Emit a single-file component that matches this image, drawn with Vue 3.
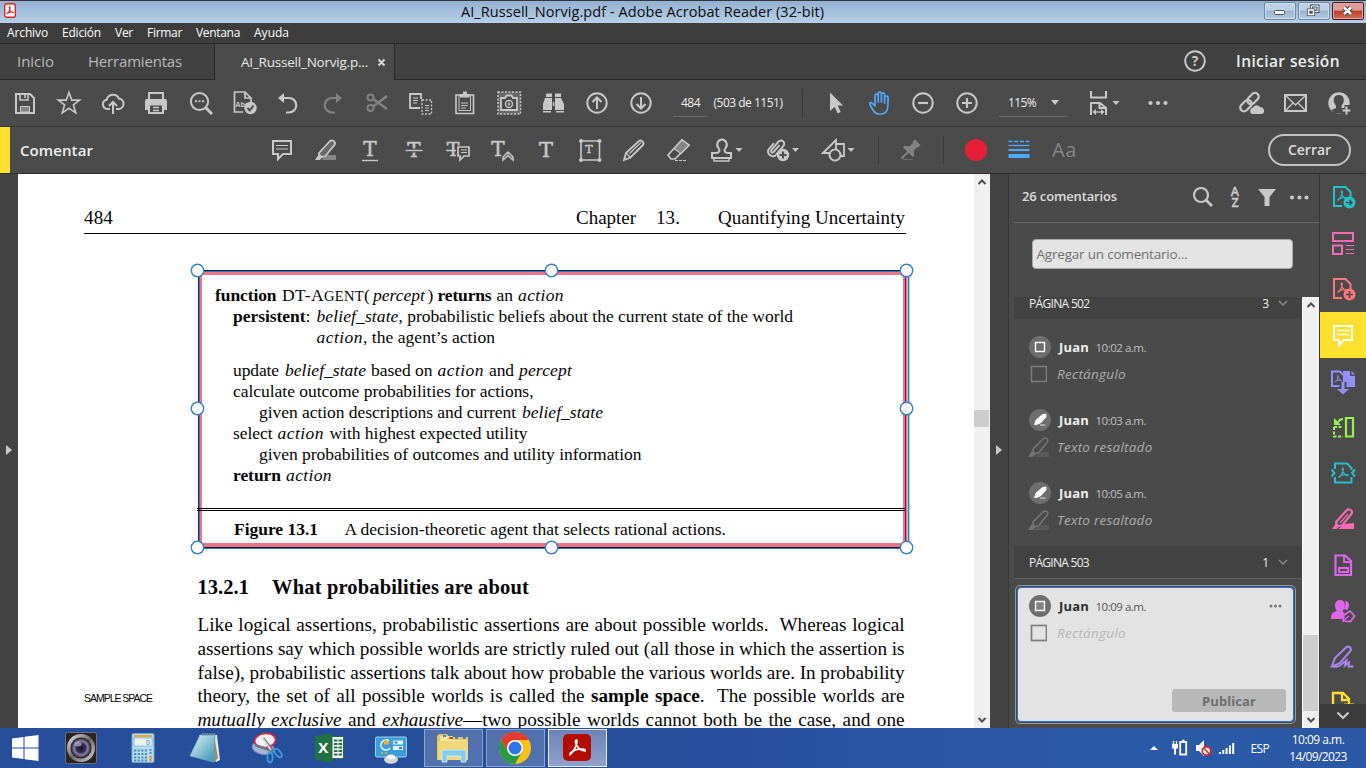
<script setup>
// Stretches or tightens a run of text to a given width through letter-spacing.
const vFit = {
  mounted(el, { value }) {
    if (!value) return
    const n = el.textContent.length
    const w = el.getBoundingClientRect().width
    el.style.letterSpacing = ((value - w) / n).toFixed(4) + 'px'
  }
}

const F = 'fill="currentColor" stroke="none"'
const T = (x, y, s) => `<text x="${x}" y="${y}" font-size="${s}" font-family="DejaVu Serif" text-anchor="middle" fill="currentColor" stroke="currentColor" stroke-width=".5">T</text>`
const acro = (x, y, s) => `<path transform="translate(${x} ${y}) scale(${s})" stroke-width="1.3" d="M-5 5C-2 3.500 .3-1 .3-4.500C.3-6-1-6-.8-4.300C-.3-1 2 2.200 5 3C6.300 3.200 5.800 1.500 4 1.700C1 1.700-2.500 2.600-4.800 4.200"/>`
const caret = (x) => `<path ${F} d="M${x - 3.500}-2h7l-3.500 4z"/>`

const icons = {
  save: '<path d="M-9-9H5l4 4V10H-9z"/><path d="M-5-9v6h8v-6M0-8v3" stroke-width="1.600"/><path fill="#858585" stroke-width="1" d="M-4.500 3.500h9V9h-9z"/>',
  star: '<path d="M0-10.500l2.700 7.600H10.700L4.400 1.900l2.400 8L0 5.300l-6.800 4.600 2.400-8L-10.700-2.900h8z" stroke-width="1.600"/>',
  cloud: '<path d="M-3 6h-2.500a4.700 4.700 0 0 1-.8-9.300a6.500 6.500 0 0 1 12.200-1.200a5.300 5.300 0 0 1 .1 10.500H3"/><path d="M0 11V-1M-4 3l4-4 4 4"/>',
  print: `<g transform="translate(-1 0)"><path d="M-7-4v-6H7v6"/><path ${F} d="M-11-2q0-2 2-2H9q2 0 2 2v9H-11z"/><path fill="#4b4b4b" d="M-7 1.500V10H7V1.500z" /><path stroke-width="1.300" d="M-3 4.500h6M-3 7.500h6"/></g>`,
  searchdots: `<circle cx="-1.500" cy="-1.500" r="8.600"/><path stroke-width="3" d="M5 5l6 6"/><path ${F} d="M-6-2.700h2v2h-2zm3.500 0h2v2h-2zm3.500 0h2v2h-2z"/>`,
  check: `<path d="M-2 9h-8.500V-11H0l6 6v5M0-11v6h6" stroke-width="1.700"/><text x="-3" y="4" font-size="7" font-family="Open Sans" font-weight="700" text-anchor="middle" ${F}>Abc</text><circle cx="5.500" cy="5" r="6.200" ${F}/><path stroke="#4b4b4b" d="M2.500 5l2.300 2.400L8.500 2.500"/>`,
  undo: `<g transform="translate(-1 0)"><path stroke-width="2.200" d="M-5-5H1a7 7 0 0 1 0 14.500H-2"/><path ${F} d="M-10-5l6-5v10z"/></g>`,
  redo: `<g transform="scale(-1 1)" color="#828282"><path stroke="#828282" stroke-width="2.200" d="M-5-5H1a7 7 0 0 1 0 14.500H-2"/><path ${F} d="M-9-5l6-5v10z"/></g>`,
  cut: '<g stroke="#828282"><circle cx="-6.500" cy="-5.500" r="3"/><circle cx="-6.500" cy="5" r="3"/><path stroke-width="2.600" d="M-4-4L10 6M-4 3.500L10-7"/></g>',
  copy: '<path d="M-1 5h-10V-9H0v5" stroke-width="1.800"/><path stroke-width="1" d="M-8-5h5M-8-2.500h5M-8 0h4"/><path stroke-width="1.400" stroke-dasharray="2 1.500" d="M1-3h9.500V11H1z"/><path stroke-width="1" d="M4 2.500h4M4 5h4M4 7.500h4"/>',
  paste: `<path d="M-9-8V10.500H8.500V-8z" stroke-width="1.600"/><path stroke-width="1" d="M-6-8V7.500H5.500V-8"/><path stroke-width="1.200" d="M-4 0h7M-4 2.500h7M-4 5h5"/><path ${F} d="M-5-9h3v-2.500h4v2.500h2.500v3.500H-5z"/>`,
  camera: '<path stroke-width="1.500" stroke-dasharray="2 1.500" fill="#686868" d="M-11-11h22.500V11H-11z"/><path fill="#4b4b4b" stroke-width="1.800" d="M-8-5h4l1.500-2.500h5L4-5h4V7H-8z"/><circle cy="1" r="3.500" stroke-width="1.400"/><path stroke-width="1.200" d="M-1.500 1h3M0-.5v3"/>',
  find: `<g ${F}><path d="M-7-9.500h6v3.500h-6zM2-9.500h6v3.500H2zM-8-5h7v12h-9V1zM2-5h6l3 6v6H2zM-10 8h8v1.500h-8zM3 8h8v1.500H3zM-.2-1h1.500v4h-1.500z"/></g>`,
  up: '<circle r="9.700"/><path d="M0 6V-5M-4.500-1L0-5.500 4.500-1"/>',
  down: '<circle r="9.700"/><path d="M0-6V5M-4.500 1L0 5.500 4.500 1"/>',
  pointer: `<path ${F} d="M-5-10.500L8 2.500H2.700l3 6.500-3 1.500-3-6.500L-5 8z"/>`,
  hand: '<path transform="translate(1 0)" stroke="#4fa9f8" stroke-width="1.700" stroke-linejoin="round" d="M-5 0V-7c0-2.400 3.200-2.400 3.200 0v6V-9.500c0-2.200 3.200-2.200 3.200 0V-1v-7.500c0-2.200 3.200-2.200 3.200 0V0v-5c0-2.400 3.500-2.400 3.500 0l-.3 8.500C7.500 8.500 5 11 1 11H-1C-4 11-5.500 9.500-7 7l-3-5c-1-2.200 1-3.300 2.600-1.500L-5 3z"/>',
  minus: '<circle r="9.700"/><path stroke-width="2.200" d="M-5 0H5"/>',
  plus: '<circle r="9.700"/><path stroke-width="2.200" d="M-5 0H5M0-5V5"/>',
  fit: `<path d="M-16-12v6.500h15V-12M-16 12V0h9l6 5v7M-7.500 0v5H-1" /><path stroke-width="1.300" d="M-13.500 9H-3.500"/><path ${F} d="M-14.500 9l3.500-3v6zM-2.500 9l-3.500-3v6z"/>` + caret(9),
  dots: `<g ${F}><circle cx="-7.500" r="2.100"/><circle r="2.100"/><circle cx="7.500" r="2.100"/></g>`,
  link: `<g transform="translate(-1 -1) rotate(-45)"><rect x="-12" y="-4" width="13" height="7.500" rx="3.700" stroke-width="2.200"/><rect x="-2" y="-4" width="13" height="7.500" rx="3.700" stroke-width="2.200"/></g><path ${F} d="M1 11a3.500 3.500 0 0 1 1-6.500a4 4 0 0 1 7-.5a3.700 3.700 0 0 1 2 7z"/>`,
  mail: '<path d="M-10-8h21V8h-21z"/><path stroke-width="1.300" d="M-10-8L.5 2 11-8M-10 8l8-8M11 8L3 0"/>',
  user: `<circle r="10.700" ${F}/><g fill="#4b4b4b" stroke="none"><path d="M-.2-8c4.500 0 5.700 3.500 4.700 7.500L2.500 3v2l4.500 2-4 3.500h-7L-7.500 7l4.500-2V3L-5-.5c-1-4 .5-7.500 4.800-7.500z"/><path d="M5.500 2h6v9h-9V5h3z"/></g><path stroke-width="2" d="M7.500 3.500v8M3.500 7.500h8"/>`,

  comment: '<path d="M-9-9H9V4H1l-5 5V4h-5z"/><path stroke-width="1.200" d="M-6-4.500H6M-6-1H6"/>',
  marker: `<path fill="#858585" stroke="none" d="M-4 9.500L1 5h9v5H-5z"/><path d="M-7 3L3.500-8.500c2-2.200 7-.5 5 3.500L-1 6.500-6 7z" fill="#6a6a6a" stroke-width="1.800"/><path ${F} d="M-7 4l4 3-3.500 3H-11z"/>`,
  tunder: T(0, 6, 20) + '<path stroke-width="1.400" d="M-8 10.500H8"/>',
  tstrike: T(0, 7, 20) + '<path stroke="#4b4b4b" stroke-width="4" d="M-8 .5H8"/><path stroke-width="1.400" d="M-8.500 0.500H8.500"/>',
  treplace: T(-5, 6, 19) + '<path fill="#4b4b4b" stroke="none" d="M-2-4h15V12H-2z"/><path d="M-12 .5H-2M0-3H11V6H6L2 10V6H0z" stroke-width="1.700"/><path stroke-width="1" d="M3 0h6M3 2.500h6"/>',
  tinsert: T(-4, 6, 20) + '<path stroke-width="1.500" d="M1 10V7l5-5 5 5v3l-5-4.500z"/>',
  text: T(0, 6.500, 21),
  textbox: T(-1, 3, 11) + `<path stroke-width="1.600" d="M-9-9H9.500V10H-9z"/><g ${F}><circle cx="-9" cy="-9" r="2"/><circle cx="9.500" cy="-9" r="2"/><circle cx="-9" cy="10" r="2"/><circle cx="9.500" cy="10" r="2"/></g>`,
  pencil: '<path stroke-width="1.800" d="M-8 3L5-9c2-2 6 2 4 4L-3.500 7.500-10 10z"/><path stroke-width="1.200" d="M-4.500 3.500L7-7.500M-8 3l4.500 4.500"/>',
  eraser: '<path stroke-width="1.700" d="M-10 5L4-10l7 5L-3 9h-4z"/><path fill="#858585" stroke-width="1.200" d="M-4-1.500L4-10l7 5-8 8.500z"/><path stroke-width="1" stroke-dasharray="3 1" d="M-3 10.500H9"/>',
  stamp: '<path d="M-10 3h4c4 0 4-3 2.500-5C-6.500-5-4-10.500 0-10.500S6.500-5 3.500-2C2 0 2 3 6 3h3v5h-19z"/><path stroke-width="1.500" d="M-8 8v3H7V8"/>' + caret(17),
  clip: `<path transform="translate(-2 0) rotate(40)" stroke-width="1.900" d="M-6-4V5a5 5 0 0 0 9 0V-8a3 3 0 0 0-6.500 0V3a1.500 1.500 0 0 0 3 0V-6"/><circle cx="5" cy="5" r="6.200" ${F}/><path stroke="#4b4b4b" d="M5 1.500v7M1.500 5h7"/>` + caret(17.5),
  shapes: '<path d="M-11 3L2-10V3zM2-6h8v12H7" stroke-width="1.800"/><circle cx="1" cy="5" r="5.500" fill="#4b4b4b"/>' + caret(17),
  pin: '<g transform="rotate(45)" fill="#828282" stroke="none"><path d="M-4-11H4v3L3-7v5l4 3v2H1v9h-2V3h-6V1l4-3v-5l-1-1z"/></g><path stroke="#6c6c6c" stroke-width="1.200" d="M-7 9.500H3"/>',
  weight: '<g stroke="#4fa9f8"><path stroke-width="1.300" stroke-dasharray="4 1.700" d="M-10.500-8.500h21"/><path stroke-width="1.300" d="M-10.500-4.500h21"/><path stroke-width="2.200" d="M-10.500 0h21"/><path stroke-width="4" d="M-10.500 6h21"/></g>',

  rExport: `<path d="M-1 9h-8V-10H2.500L7.500-5v5"/>${acro(-1, -1, 0.9)}<circle cx="6.500" cy="5.500" r="6" ${F}/><path stroke="#4b4b4b" stroke-width="1.600" d="M3 5.500h6M6.500 3l2.500 2.500L6.500 8"/>`,
  rOrganize: '<path d="M-10-10h20v8h-20zM-10 2.500H-1V11h-9z"/><path stroke-width="1.200" d="M3 2.500h8M3 6.500h8M3 10.500h8"/>',
  rCreate: `<path d="M-1 9h-8V-10H2.500L7.500-5v5"/>${acro(-1, -1, 0.9)}<circle cx="6.500" cy="5.500" r="6" ${F}/><path stroke="#4b4b4b" stroke-width="1.600" d="M3 5.500h7M6.500 2v7"/>`,
  rComment: '<path d="M-9-9H9V5H1l-5 5V5h-5z"/><path stroke-width="1.700" d="M-6-4.500H6M-6-.5H6"/>',
  rCombine: `<path ${F} d="M0-10h7v5h5V6H3z"/><path ${F} d="M8.500-10L12-6.500H8.500z"/><path fill="#4b4b4b" d="M-2 5h-9V-9.500h8l4 4V5z"/>${acro(-5, -2, 0.65)}<path stroke="#4b4b4b" stroke-width="7" d="M0 1v9"/><path stroke-width="3" d="M0 1v8"/><path ${F} d="M-6 8H6L0 13.500z"/>`,
  rPages: `<path stroke-width="2.200" d="M3-9h7V9.500H3z"/><path stroke-dasharray="3 1.500" d="M-9 0v9.500H0M-9 0H0"/><path stroke-width="2.200" d="M0-8c-3 0-4 1.500-5 3"/><path ${F} d="M-9-9v7h7z"/>`,
  rCompress: `<path d="M-8-4V-9.500H4L8.500-5v2M-8 4v5.500H8.500V4"/>${acro(0, 0, 0.9)}<path d="M-11.500-3.500L-8.500 0l-3 3.500M12-3.500L9 0l3 3.500"/>`,
  rMarker: `<path ${F} d="M-4 9.500L1 5l10-1v6H-5z"/><path stroke-width="2.100" d="M-7 3L3.500-8.500c2-2.200 7-.5 5 3.500L-1 6.500-6 7z" fill="#4b4b4b"/><path stroke-width="1.200" d="M-3 4L5-5"/><path ${F} d="M-7 4l4 3-3.500 3H-11z"/>`,
  rForm: '<path stroke-width="2.200" d="M-7.500-9.500H2L8-4V10H-7.500z"/><path stroke-width="1.800" d="M1-9.500V-3H8M-4 3H5v4h-9z"/>',
  rSign: `<g ${F}><path d="M-3-11c6 0 6 7 2.500 11L2 3-1 8h-11c0-5 1-7 6-8c-3-4-3-11 3-11zM2-10c5 0 5 6 2 9L1-2c1.500-3 2-6 1-8z"/></g><path fill="#4b4b4b" stroke-width="1.700" d="M0 10l1-6 6-4 4.500 5-4 5.500z"/><path stroke-width="1.300" d="M1 9l5-4"/>`,
  rFill: '<path stroke-width="2" d="M-11 9l3-8L3-9.500c2-2 6 0 4.500 3.500L-3 6l-7.500 3.500c5 1 8-.5 10-3l4-3-1.500 5 4-3-.500 4h5"/>',
  rLast: '<path stroke-width="2.300" d="M-10 12V-10H0l6 6v6M-1-10v7h7"/><path d="M1 1.500h10"/>'
}

const menus = [['Archivo', 41], ['Edición', 39], ['Ver', 18], ['Firmar', 35], ['Ventana', 44], ['Ayuda', 35]]
const bar1 = ['save', 'star', 'cloud', 'print', 'searchdots', 'check', 'undo', 'redo', 'cut', 'copy', 'paste', 'camera', 'find', 'up', 'down']
const bar2 = ['comment', 'marker', 'tunder', 'tstrike', 'treplace', 'tinsert', 'text', 'textbox', 'pencil', 'eraser']
const rail = [
  ['rExport', '#24c1cc'], ['rOrganize', '#f56bb5'], ['rCreate', '#fa777b'], ['rComment', '#fff'],
  ['rCombine', '#9490fa'], ['rPages', '#9bf050'], ['rCompress', '#24c1cc'], ['rMarker', '#f56bb5'],
  ['rForm', '#e066ee'], ['rSign', '#e066ee'], ['rFill', '#a984ee'], ['rLast', '#ffe02e']
]

// Each run: text, style, gap before it, width
const code = [
  [15, [['function', 'b', 0, 61.500], ['DT-A', '', 5.500, 42], ['GENT', 'sc', 0, 40], ['(', '', 0, 6], ['percept', 'i', 3, 52], [')', '', 2.500, 6], ['returns', 'b', 4, 54], ['an', '', 5, 16.500], ['action', 'i', 5, 46]]],
  [33, [['persistent', 'b', 0, 72.500], [':', '', 0, 5], ['belief_state', 'i', 6, 82], [', probabilistic beliefs about the current state of the world', '', 0, 394.500]]],
  [116.500, [['action', 'i', 0, 46.500], [', the agent’s action', '', 0, 132]]],
  null,
  [33, [['update', '', 0, 46], ['belief_state', 'i', 6, 81], ['based on', '', 5, 61.500], ['action', 'i', 5, 46.500], ['and', '', 5, 25], ['percept', 'i', 5, 53]]],
  [33, [['calculate outcome probabilities for actions,', '', 0, 300.500]]],
  [59, [['given action descriptions and current', '', 0, 257], ['belief_state', 'i', 6, 81]]],
  [33, [['select', '', 0, 39.500], ['action', 'i', 5, 46.500], ['with highest expected utility', '', 5.500, 198]]],
  [59, [['given probabilities of outcomes and utility information', '', 0, 382.500]]],
  [33, [['return', 'b', 0, 48], ['action', 'i', 5, 46]]]
]
const comments = [
  { time: '10:02 a.m.', kind: 'rect', label: 'Rectángulo', w: 69 },
  { time: '10:03 a.m.', kind: 'mark', label: 'Texto resaltado', w: 95.500 },
  { time: '10:05 a.m.', kind: 'mark', label: 'Texto resaltado', w: 95.500 }
]
const handles = ['tl', 'tc', 'tr', 'ml', 'mr', 'bl', 'bc', 'br']
</script>

<template>
  <div class="screen">
    <header class="title">
      <svg class="pdf" width="12" height="15" viewBox="0 0 12 15"><rect x=".7" y=".7" width="10.600" height="13.600" rx="2" fill="#fff" stroke="#e2231a" stroke-width="1.400" /><path d="M2.500 11C4 10 6 7 6 4.500C6 3 5 3.500 5.300 5C6 8 8 9.500 9.700 9.800C8 8.800 5 9 2.500 11z" fill="none" stroke="#e2231a" stroke-width="1.100" /></svg>
      <span v-fit="363">AI_Russell_Norvig.pdf - Adobe Acrobat Reader (32-bit)</span>
      <div class="wins">
        <i><svg width="32" height="18" viewBox="0 0 32 18"><rect x="10.500" y="8.500" width="10" height="4" rx="1" fill="#f5f5f5" stroke="#4e5666" /></svg></i>
        <i><svg width="32" height="18" viewBox="0 0 32 18" fill="none"><path d="M13.500 4h6.500v5.500h-6.500z" stroke="#4e5666" stroke-width="3" /><path d="M13.500 4h6.500v5.500h-6.500z" stroke="#fff" /><path d="M10.500 8h5v4.500h-5z" fill="#4e5666" stroke="#4e5666" stroke-width="3.200" /><path d="M10.500 8h5v4.500h-5z" stroke="#fff" stroke-width="1.400" /></svg></i>
        <i class="x"><svg width="32" height="18" viewBox="0 0 32 18"><path d="M12 5.500l7 6.500M19 5.500l-7 6.500" stroke="#4a4450" stroke-width="4.500" /><path d="M12 5.500l7 6.500M19 5.500l-7 6.500" stroke="#fff" stroke-width="2.400" /></svg></i>
      </div>
    </header>
    <nav class="menu"><span v-for="m in menus" :key="m[0]" v-fit="m[1]">{{ m[0] }}</span></nav>
    <div class="tabs">
      <div class="home"><span v-fit="37">Inicio</span><span v-fit="94">Herramientas</span></div>
      <div class="tab"><span v-fit="127">AI_Russell_Norvig.p...</span><svg width="9" height="9" viewBox="0 0 9 9"><path d="M1.500 1.500l6 6M7.500 1.500l-6 6" stroke="#d5d5d5" stroke-width="2" /></svg></div>
      <div class="tabrest">
        <svg width="22" height="22" viewBox="-11 -11 22 22" fill="none"><circle r="9.800" stroke="#c8c8c8" stroke-width="1.900" /><text y="5" text-anchor="middle" font-size="14" font-weight="700" fill="#c8c8c8">?</text></svg>
        <b v-fit="104">Iniciar sesión</b>
      </div>
    </div>
    <div class="bar one">
      <svg v-for="n in bar1" :key="n" class="ic" viewBox="-22 -23 44 46" v-html="icons[n]" />
      <span class="page"><span v-fit="19">484</span></span>
      <span class="of" v-fit="69">(503 de 1151)</span>
      <i class="sep" />
      <svg v-for="n in ['pointer', 'hand', 'minus', 'plus']" :key="n" class="ic" viewBox="-22 -23 44 46" v-html="icons[n]" />
      <span class="zoom"><span v-fit="28">115%</span><svg width="8" height="5" viewBox="0 0 8 5"><path d="M0 0h8L4 5z" fill="#c8c8c8" /></svg></span>
      <svg class="ic fitp" viewBox="-22 -23 44 46" v-html="icons.fit" />
      <svg class="ic" viewBox="-22 -23 44 46" v-html="icons.dots" />
      <span class="grow" />
      <svg v-for="n in ['link', 'mail', 'user']" :key="n" class="ic" viewBox="-22 -23 44 46" v-html="icons[n]" />
    </div>
    <div class="bar two">
      <i class="yellow" />
      <b class="name"><span v-fit="73">Comentar</span></b>
      <svg v-for="n in bar2" :key="n" class="ic" viewBox="-22 -23 44 46" v-html="icons[n]" />
      <svg v-for="n in ['stamp', 'clip', 'shapes']" :key="n" class="ic wide" viewBox="-22 -23 56 46" v-html="icons[n]" />
      <i class="sep s1" />
      <svg class="ic pinc" viewBox="-22 -23 44 46" v-html="icons.pin" />
      <i class="sep" />
      <i class="red" />
      <svg class="ic" viewBox="-22 -23 44 46" v-html="icons.weight" />
      <span class="aa" v-fit="25">Aa</span>
      <span class="grow" />
      <button class="close"><span v-fit="43">Cerrar</span></button>
    </div>
    <main>
      <aside class="strip left"><i class="tri" /></aside>
      <section class="paper">
        <div class="running"><span v-fit="29">484</span><span class="grow" /><span v-fit="60">Chapter</span><span class="r2" v-fit="24">13.</span><span class="r3" v-fit="187">Quantifying Uncertainty</span></div>
        <figure>
          <div class="code">
            <template v-for="(l, k) in code" :key="k">
              <div v-if="l" class="cl" :style="{ paddingLeft: l[0] + 'px' }"><span v-for="(s, j) in l[1]" :key="j" :class="s[1]" :style="{ marginLeft: s[2] + 'px' }" v-fit="s[3]">{{ s[0] }}</span></div>
              <div v-else class="skip" />
            </template>
          </div>
          <div class="rule" />
          <figcaption><b v-fit="84">Figure 13.1</b><span v-fit="381.500">A decision-theoretic agent that selects rational actions.</span></figcaption>
          <i v-for="h in handles" :key="h" class="handle" :class="h" />
        </figure>
        <h2><span v-fit="51.500">13.2.1</span><span class="ht" v-fit="257">What probabilities are about</span></h2>
        <div class="body">
          <div class="note"><span v-fit="68">SAMPLE SPACE</span></div>
          <div class="para">
            <p>Like logical assertions, probabilistic assertions are about possible worlds.&nbsp; Whereas logical</p>
            <p>assertions say which possible worlds are strictly ruled out (all those in which the assertion is</p>
            <p>false), probabilistic assertions talk about how probable the various worlds are. In probability</p>
            <p>theory, the set of all possible worlds is called the <b>sample space</b>.&nbsp; The possible worlds are</p>
            <p><em>mutually exclusive</em> and <em>exhaustive</em>—two possible worlds cannot both be the case, and one</p>
          </div>
        </div>
      </section>
      <div class="scroll doc"><svg class="ar" viewBox="0 0 10 8"><path d="M1.500 6L5 2.500 8.500 6" /></svg><i class="thumb" /><svg class="ar" viewBox="0 0 10 8"><path d="M1.500 2L5 5.500 8.500 2" /></svg></div>
      <aside class="strip right"><i class="tri" /></aside>
      <section class="panel">
        <div class="phead">
          <b v-fit="95">26 comentarios</b>
          <svg width="126" height="30" viewBox="0 0 126 30" fill="none" stroke="#c8c8c8">
            <circle cx="17" cy="13" r="7" stroke-width="2.200" /><path d="M22 18l6 6" stroke-width="2.600" />
            <g fill="#c8c8c8" stroke="#c8c8c8" stroke-width=".3" font-size="12.500" font-weight="600" text-anchor="middle"><text x="51" y="14">A</text><text x="51" y="24.500">Z</text></g>
            <path d="M74 7h18l-6.500 8v9h-5v-9z" fill="#c8c8c8" stroke="none" />
            <g fill="#c8c8c8" stroke="none"><circle cx="108" cy="15.500" r="2.100" /><circle cx="115.500" cy="15.500" r="2.100" /><circle cx="122.500" cy="15.500" r="2.100" /></g>
          </svg>
        </div>
        <div class="addbox"><div class="add"><span v-fit="151">Agregar un comentario...</span></div></div>
        <div class="listrow">
          <div class="list">
            <div class="pg first"><span v-fit="60.500">PÁGINA 502</span><span class="grow" /><span>3</span><svg width="10" height="6" viewBox="0 0 10 6"><path d="M1 1l4 4 4-4" /></svg></div>
            <article v-for="c in comments" :key="c.time">
              <div class="who">
                <svg width="22" height="22" viewBox="-11 -11 22 22"><circle r="11" fill="#6e6e6e" /><rect v-if="c.kind === 'rect'" x="-4.500" y="-4.500" width="9" height="9" fill="none" stroke="#fff" stroke-width="1.400" /><path v-else d="M-5.500 4.500l1.500-4.500L2.500-5.500 6-6v3L.5 3l-4 1.500zM0 5h5.500" fill="#fff" stroke="#fff" stroke-width=".8" /></svg>
                <b v-fit="30">Juan</b><span v-fit="50.500">{{ c.time }}</span>
              </div>
              <div class="what">
                <svg v-if="c.kind === 'rect'" width="18" height="18" viewBox="0 0 18 18"><rect x="2.500" y="1.500" width="15" height="15" fill="none" stroke="#7d7d7d" stroke-width="1.500" /></svg>
                <svg v-else class="mk" width="22" height="22" viewBox="-11 -11 22 22"><path d="M-5 9.500L2 5h8v5H-5z" fill="#5a5a5a" /><path d="M-6 2L4-8c2-2 6-.5 4.500 2.500L0 5.500-5 7z" fill="#4a4a4a" stroke="#747474" stroke-width="1.600" /><path d="M-7 4l4 3-3.500 3H-11z" fill="#747474" /></svg>
                <i v-fit="c.w">{{ c.label }}</i>
              </div>
            </article>
            <div class="pg second"><span v-fit="60">PÁGINA 503</span><span class="grow" /><span>1</span><svg width="10" height="6" viewBox="0 0 10 6"><path d="M1 1l4 4 4-4" /></svg></div>
            <div class="card"><div class="inner">
              <div class="who">
                <svg width="22" height="22" viewBox="-11 -11 22 22"><circle r="11" fill="#6e6e6e" /><rect x="-4.500" y="-4.500" width="9" height="9" fill="#858585" stroke="#fff" stroke-width="1.400" /></svg>
                <b v-fit="30">Juan</b><span v-fit="50.500">10:09 a.m.</span><span class="grow" />
                <svg width="13" height="4" viewBox="0 0 13 4" fill="#777"><circle cx="2" cy="2" r="1.500" /><circle cx="6.500" cy="2" r="1.500" /><circle cx="11" cy="2" r="1.500" /></svg>
              </div>
              <div class="what"><svg width="18" height="18" viewBox="0 0 18 18"><rect x="2.500" y="1.500" width="15" height="15" fill="none" stroke="#7d7d7d" stroke-width="1.700" /></svg><i v-fit="69">Rectángulo</i></div>
              <button><span v-fit="54">Publicar</span></button>
            </div></div>
          </div>
          <div class="scroll com"><svg class="ar" viewBox="0 0 10 8"><path d="M1.500 6L5 2.500 8.500 6" /></svg><i class="thumb" /><svg class="ar" viewBox="0 0 10 8"><path d="M1.500 2L5 5.500 8.500 2" /></svg></div>
        </div>
      </section>
      <aside class="rail">
        <div class="tools"><div v-for="r in rail" :key="r[0]" class="cell" :class="{ on: r[0] === 'rComment' }" :style="{ color: r[1] }"><svg class="ric" viewBox="-23 -23 46 46" v-html="icons[r[0]]" /></div></div>
        <div class="more"><svg width="14" height="9" viewBox="0 0 14 9"><path d="M1.500 1.500L7 7l5.500-5.500" fill="none" stroke="#c8c8c8" stroke-width="2.200" /></svg></div>
      </aside>
    </main>
    <footer>
      <div class="start"><svg width="28" height="28" viewBox="0 0 28 28" fill="#fff"><path d="M1 4.500L12.500 3v10.500H1zM13.500 2.800L27.500 1v12.500h-14zM1 14.500h11.500V25L1 23.500zM13.500 14.500h14V27l-14-1.800z" /></svg></div>
      <div class="app"><svg viewBox="0 0 34 34"><defs><linearGradient id="cm" x2="1" y2="1"><stop stop-color="#eee" /><stop offset=".5" stop-color="#6b6866" /><stop offset="1" stop-color="#ddd" /></linearGradient><radialGradient id="ln"><stop stop-color="#171126" /><stop offset=".45" stop-color="#3a2f58" /><stop offset=".65" stop-color="#8c80a5" /><stop offset="1" stop-color="#16141c" /></radialGradient></defs><rect x="1.500" y="1.500" width="31" height="31" rx="2" fill="#292423" stroke="#87898f" stroke-width=".7" /><circle cx="17" cy="17" r="14" fill="url(#cm)" /><circle cx="17" cy="17" r="10.500" fill="url(#ln)" /><ellipse cx="14" cy="13" rx="3.500" ry="2.500" fill="#b5a9cc" opacity=".7" /></svg></div>
      <div class="app"><svg viewBox="0 0 34 34"><rect x="6" y="2.500" width="22" height="29" rx="1.500" fill="#b9dcf0" stroke="#6fa9d2" /><rect x="8" y="4" width="18" height="2" fill="#eda33c" /><rect x="8" y="7" width="18" height="8" fill="#e8f5fb" stroke="#75aacb" stroke-width=".7" /><text x="22" y="14" font-size="7" fill="#3674a7" text-anchor="middle">0</text><path d="M8 19.500h13M8 23h13M8 26.500h13M8 29.500h13" stroke="#4b8ec1" stroke-width="2.200" stroke-dasharray="2.300 1.300" /><path d="M24.500 18v5" stroke="#4b8ec1" stroke-width="2" stroke-dasharray="2 1" /><path d="M24.500 24.500v6" stroke="#e5962e" stroke-width="2.200" /></svg></div>
      <div class="app"><svg viewBox="0 0 34 34"><defs><linearGradient id="np" x2="1" y2="1"><stop stop-color="#e6f7fa" /><stop offset="1" stop-color="#3290ae" /></linearGradient></defs><path d="M11 4h18l3 25-4 2z" fill="#e2e6df" /><path d="M12 4h15l-1 27L2 25z" fill="url(#np)" stroke="#6cb7cd" stroke-width=".7" /><path d="M14 3.500h14" stroke="#8a989d" stroke-width="2.500" stroke-dasharray="1.300 1" /><path d="M26 5l4 22-4 4z" fill="#94897b" /></svg></div>
      <div class="app"><svg viewBox="0 0 34 34"><ellipse cx="13" cy="17" rx="11" ry="6.500" fill="#a9b4da" stroke="#7184bd" transform="rotate(8 13 17)" /><ellipse cx="15" cy="9.500" rx="10.500" ry="7" fill="#f5f3f4" stroke="#df2432" stroke-width="1.600" transform="rotate(-8 15 9)" /><path d="M13 7l11 14M5 14l20 7" stroke="#6d7786" stroke-width="2.500" /><path d="M11 5l10 14" stroke="#e9ecef" stroke-width="1.300" /><ellipse cx="20" cy="26.500" rx="2.500" ry="5" fill="none" stroke="#3c9ce0" stroke-width="1.800" /><ellipse cx="28" cy="22" rx="2.500" ry="5" fill="none" stroke="#3c9ce0" stroke-width="1.800" transform="rotate(-40 28 22)" /></svg></div>
      <div class="app"><svg viewBox="0 0 34 34"><path d="M20 5.500h11.500v22H20z" fill="#fff" stroke="#207245" /><path d="M22 9.500h8M22 13h8M22 16.500h8M22 20h8M22 23.500h8" stroke="#207245" stroke-width="2" stroke-dasharray="3.500 1" /><path d="M3 5l17-3v30L3 28.500z" fill="#207245" /><text x="11.300" y="22" font-size="15" font-weight="700" text-anchor="middle" fill="#fff">X</text></svg></div>
      <div class="app"><svg viewBox="0 0 34 34"><rect x="1.500" y="6" width="31" height="20" rx="1.500" fill="#3d9cd9" stroke="#9bd3f2" /><path d="M15 10a5 5 0 1 0 1 7" fill="none" stroke="#d7f0fc" stroke-width="1.800" /><path d="M10 8.500a5 5 0 0 1 5 5h-5z" fill="#f6ac3b" /><path d="M19 11.500h10M19 17h10" stroke="#e2f5fd" stroke-width="4" /><path d="M20.500 11.500h3M25 17h3" stroke="#2586c5" stroke-width="2" /><circle cx="8" cy="22" r="1" fill="#f6ac3b" /><circle cx="12" cy="22" r="1" fill="#f6ac3b" /><ellipse cx="17" cy="28.500" rx="7" ry="4.200" fill="#d7d7d9" /><ellipse cx="17" cy="26" rx="4" ry="2.500" fill="#f5f5f5" /></svg></div>
      <div class="app win"><svg viewBox="0 0 34 34"><path d="M1 5l2-2h8l2 3h19v23H1z" fill="#e6c75e" /><path d="M4 5h13v4h14v20H4z" fill="#f8e59a" /><path d="M7 4h3v2H7zM19 6h3v2h-3zM27 6h3v2h-3z" fill="#2b8ede" /><path d="M13 6h4v2h-4z" fill="#cf4632" /><path d="M2 10h30v19H2z" fill="#f0d778" /><path d="M6 31V21q0-2 2-2h20q2 0 2 2v10h-5v-6H11v6z" fill="#86cdeb" stroke="#b9e8fa" /></svg></div>
      <div class="app win"><svg viewBox="-17 -17 34 34"><circle r="16" fill="#fbc116" /><path d="M-13.900-8A16 16 0 0 1 13.900-8H0L-7-4.500-7 4z" fill="#e33b2e" /><path d="M-13.900-8L-6.900 4 0 8 6.900 4 0 16A16 16 0 0 1-13.900-8z" fill="#2a9a47" /><circle r="8" fill="#fff" /><circle r="6.500" fill="#2f73ea" /></svg></div>
      <div class="app win active"><svg viewBox="0 0 34 34"><rect x="3" y="3" width="28" height="27" rx="5" fill="#b30b00" /><path d="M10 23.500C13 21 17 15 17 10.500C17 8 15 8.500 15.500 11.500C17 17 21 19.500 25 20C26 18 21 17.500 17 18.500C13 19.500 9.500 22 10 23.500z" fill="none" stroke="#fff" stroke-width="1.700" /></svg></div>
      <span class="grow" />
      <svg class="tray" viewBox="0 0 90 24">
        <path d="M5 14h8L9 10z" fill="#fff" />
        <path d="M28.500 5v3M31.500 5v3" stroke="#fff" stroke-width="1.300" /><path d="M27 8h6v3q0 2-2 2v5.500h-2V13q-2 0-2-2z" fill="#fff" /><rect x="35.200" y="6" width="6" height="12.500" fill="#2a559f" stroke="#fff" stroke-width="1.800" /><path d="M37 4.500h2.500" stroke="#fff" stroke-width="1.500" />
        <path d="M51 9h3l5-5v16l-5-5h-3z" fill="#fff" /><circle cx="61.500" cy="15" r="4.200" fill="#fff" stroke="#e1251b" stroke-width="1.800" /><path d="M59 12.500l5 5" stroke="#e1251b" stroke-width="1.600" />
        <path d="M74 18v-2h2v2zm3.300 0v-4h2v4zm3.300 0v-6h2v6zm3.300 0V9.500h2V18zm3.300 0V7h2v11z" fill="#fff" />
      </svg>
      <span class="lang" v-fit="18.500">ESP</span>
      <div class="clock"><span v-fit="52.500">10:09 a.m.</span><span v-fit="57.500">14/09/2023</span></div>
    </footer>
  </div>
</template>

<style>
body { margin: 0; overflow: hidden; }
</style>

<style scoped>
.screen { width: 1366px; height: 768px; display: flex; flex-direction: column; font-family: "Open Sans", "Noto Sans", sans-serif; font-size: 12px; color: #e8e8e8; overflow: hidden; }
.screen * { box-sizing: border-box; }
span, b { white-space: pre; }
svg { display: block; flex: none; }
.grow { flex: 1; }
.title { height: 23px; flex: none; border-top: 1px solid #33363c; background: linear-gradient(#94b1d1, #b7cfe9); display: flex; justify-content: center; position: relative; color: #0c0c0c; font-size: 14.500px; line-height: 22px; padding-right: 81px; }
.pdf { position: absolute; left: 4px; top: 2px; }
.wins { position: absolute; right: 2px; top: 1px; display: flex; gap: 2px; }
.wins i { display: block; width: 32px; height: 18px; border-radius: 2px; border: 1px solid #6f88a7; background: linear-gradient(#bdd0e4 45%, #9ab3ce 50%, #b4cbe2); box-shadow: inset 0 0 0 1px #cfdeed; }
.wins i svg { margin: -1px; }
.wins .x { border-color: #4b1523; background: linear-gradient(#de9d94 45%, #bd3b24 50%, #d0705a); box-shadow: inset 0 0 0 1px #e3a79c; }
.menu { height: 21px; flex: none; background: #3d3d3d; border-bottom: 1px solid #292929; display: flex; gap: 14px; padding-left: 7px; line-height: 20px; font-size: 12px; color: #fff; }
.tabs { height: 36px; flex: none; display: flex; font-size: 15px; line-height: 36px; }
.home { width: 215px; background: #414141; border-right: 1px solid #282828; border-bottom: 1px solid #282828; color: #b9b9b9; display: flex; gap: 34px; padding-left: 17px; font-size: 15px; line-height: 35px; }
.tab { width: 180px; background: #4b4b4b; border-right: 1px solid #282828; padding-left: 26px; display: flex; align-items: center; gap: 9px; font-size: 13.500px; color: #e8e8e8; }
.tabrest { flex: 1; background: #414141; border-bottom: 1px solid #282828; display: flex; justify-content: flex-end; align-items: center; gap: 30px; padding-right: 26px; padding-bottom: 2px; }
.tabrest b { font-weight: 600; color: #eee; font-size: 15.500px; }
.bar { height: 47px; flex: none; background: #4b4b4b; border-bottom: 1px solid #383838; display: flex; align-items: center; color: #c8c8c8; }
.ic { width: 44px; height: 46px; fill: none; stroke: currentColor; stroke-width: 2; }
.one { padding-left: 3px; padding-right: 5px; }
.page { margin-left: 10px; width: 34px; height: 27px; border-bottom: 1px solid #696969; padding-left: 8px; line-height: 26px; color: #eee; margin-right: 6.500px; font-size: 12px; }
.of { font-size: 12px; color: #eee; padding-bottom: 1px; }
.sep { width: 1px; height: 28px; background: #383838; }
.one .sep { margin-left: 19px; margin-right: 10.500px; }
.zoom { width: 68px; height: 27px; margin-left: 10px; border-bottom: 1px solid #696969; padding-left: 9px; display: flex; align-items: center; gap: 15px; color: #eee; font-size: 12px; }
.fitp { margin-left: 18px; margin-right: 7px; }
.two { border-bottom-color: #2f2f2f; }
.yellow { width: 10px; height: 46px; background: #ffe02e; }
.name { width: 250px; padding-left: 10px; color: #eee; font-size: 15px; font-weight: 600; padding-bottom: 1px; }
.wide { width: 56px; }
.ic.wide { margin-right: 0; }
.pinc { margin: 0 11px 0 9px; }
.s1 { margin-left: 10px; }
.red { width: 22px; height: 22px; border-radius: 50%; background: #e52036; margin: 0 10px 0 21px; }
.aa { font-size: 20px; color: #858585; margin-left: 11px; padding-bottom: 2px; }
.close { width: 83px; height: 32px; border-radius: 16px; border: 2px solid #c3c3c3; background: none; color: #ddd; font: 600 14px "Open Sans", sans-serif; margin-right: 15px; padding: 0; line-height: 26px; }
main { flex: 1; min-height: 0; display: flex; background: #4a4a4a; }
.strip { background: #434343; display: flex; align-items: center; flex: none; }
.strip.left { width: 18px; padding-left: 6px; }
.strip.right { width: 19px; padding-left: 6px; border-right: 1px solid #383838; }
.tri { border-left: 6px solid #c9c9c9; border-top: 5px solid transparent; border-bottom: 5px solid transparent; margin-top: -2px; }
.paper { width: 956px; flex: none; background: #fff; color: #050505; font-family: "Liberation Serif", serif; padding: 0 68px 0 66px; overflow: hidden; }
.running { height: 60px; border-bottom: 1px solid #000; display: flex; font-size: 19px; line-height: 22px; padding-top: 33px; padding-right: 1px; }
.r2 { margin-left: 20px; }
.r3 { margin-left: 38px; }
figure { position: relative; margin: 36px -4px 0 114px; height: 279px; width: 712px; border: solid #ec7687; border-width: 5px 7px 6px 4px; background: #fff; }
figure::before { content: ""; position: absolute; left: -4px; top: -5px; right: -7px; bottom: -5px; border: solid; border-width: 1px 3px 1px 1px; border-color: #0c1829 #a9cdee #0c1829 #402044; background: linear-gradient(#8c1528, #8c1528) no-repeat right 1px top / 1px 100%; }
figure::after { content: ""; position: absolute; left: -3px; top: -4px; right: -6px; bottom: -6px; border: 1px solid #2c7bc9; }
.code { height: 233px; padding-top: 10px; font-size: 17.500px; margin-left: -2px; }
.cl { height: 21px; display: flex; line-height: 21px; align-items: baseline; }
.skip { height: 12px; }
.i { font-style: italic; }
.b { font-weight: 700; }
.sc { font-size: 14.500px; }
.rule { height: 3px; border: solid #000; border-width: 1px 0; margin: 0 -2px 0 -5px; position: relative; z-index: 1; }
figcaption { font-size: 17.500px; line-height: 20px; padding: 8px 0 0 32px; display: flex; gap: 26.500px; }
.handle { position: absolute; z-index: 2; width: 13px; height: 13px; border-radius: 50%; background: #fff; border: 1.600px solid #2c7bc9; box-shadow: 0 0 0 .4px #2c7bc9; }
.tl, .tc, .tr { top: -11px; }
.ml, .mr { top: 127px; }
.bl, .bc, .br { top: 266px; }
.tl, .ml, .bl { left: -11px; }
.tc, .bc { left: 343px; }
.tr, .mr, .br { left: 698px; }
h2 { margin: 26px 0 0 113.500px; font-size: 20.500px; line-height: 24px; display: flex; }
.ht { margin-left: 23px; }
.body { display: flex; margin-top: 14px; }
.note { width: 113.500px; flex: none; padding-top: 78px; font: 10.500px/14px "Liberation Sans Narrow", "Liberation Sans", sans-serif; }
.para { width: 707px; font-size: 19.200px; }
.para p { margin: 0; height: 23.800px; line-height: 24px; text-align: justify; text-align-last: justify; word-spacing: -2px; white-space: nowrap; }
.para b { white-space: normal; }
.scroll { background: #f0f0f0; display: flex; flex-direction: column; align-items: center; justify-content: space-between; flex: none; position: relative; }
.ar { width: 10px; height: 8px; margin: 4px 0; fill: none; stroke: #4d4d4d; stroke-width: 2; }
.thumb { position: absolute; background: #cdcdcd; left: 0; width: 15px; }
.doc { width: 16px; padding-right: 1px; }
.doc .thumb { top: 236px; height: 17px; }
.panel { width: 311px; flex: none; border-right: 1px solid #383838; padding-left: 5px; display: flex; flex-direction: column; }
.phead { height: 49px; border-bottom: 1px solid #666; display: flex; justify-content: space-between; align-items: center; padding: 0 9px 2px 8px; font-size: 12.500px; color: #dcdcdc; }
.phead b { font-weight: 600; margin-top: -2px; font-size: 13px; }
.addbox { height: 74px; padding: 16px 26px 0 18px; flex: none; }
.add { height: 30px; background: #e3e3e3; border: 1px solid #a9a9a9; border-radius: 4px; color: #707070; font-size: 13.500px; line-height: 29px; padding-left: 3.500px; }
.listrow { flex: 1; display: flex; min-height: 0; }
.list { width: 288px; }
.com { width: 17px; border-left: 1px solid #fff; }
.com .thumb { top: 338px; height: 76px; }
.pg { background: #424242; display: flex; align-items: center; padding: 0 14px 0 15px; font-size: 12px; color: #eee; }
.pg svg { margin-left: 9px; fill: none; stroke: #8a8a8a; stroke-width: 1.500; }
.first { height: 22px; padding-bottom: 10px; margin-bottom: 17px; }
.second { height: 33px; border-bottom: 1px solid #5e5e5e; margin-top: -9px; }
article { height: 73px; padding-left: 15px; }
.who { height: 22px; display: flex; align-items: center; }
.who b { margin-left: 8px; font-size: 13px; color: #eee; }
.who span:not(.grow) { margin-left: 6.500px; font-size: 11.500px; color: #c0c0c0; }
.what { height: 22px; margin-top: 5px; display: flex; align-items: center; color: #adadad; font-size: 13.500px; }
.what i { margin-left: 10px; white-space: pre; }
.mk + i { margin-left: 6px; }
.mk { margin-left: -1px; margin-right: 1px; }
.card { margin: 6px 0 0 1px; width: 281px; height: 139px; border: 1px solid #9a9a9a; border-radius: 5px; padding: 1px; position: relative; margin-right: -10px; }
.inner { height: 135px; width: 277px; border: 1px solid #1f75e0; border-radius: 4px; background: #e3e3e3; padding: 7px 7px 0 11px; display: flex; flex-direction: column; }
.inner .who { padding-right: 4px; }
.inner .who b { color: #2d2d2d; }
.inner .who span:not(.grow) { color: #555; }
.inner .what { color: #b5b5b5; }
.inner button { align-self: flex-end; margin-top: 45px; width: 114px; height: 23px; flex: none; border: 0; border-radius: 3px; background: #b8b8b8; color: #6e6e6e; font: 700 13px/22px "Open Sans", sans-serif; padding: 0; }
.rail { width: 46px; background: #4b4b4b; display: flex; flex-direction: column; }
.tools { height: 530px; overflow: hidden; }
.cell { height: 46px; }
.on { background: #ffe02e; }
.ric { width: 46px; height: 46px; fill: none; stroke: currentColor; stroke-width: 2; }
.more { height: 24px; background: #3b3b3b; display: flex; justify-content: center; align-items: center; padding-bottom: 2px; }
footer { height: 40px; flex: none; background: linear-gradient(90deg, #264e9a, #264f9c 50%, #2b5aa8 80%, #2a58a4); display: flex; align-items: center; color: #fff; }
.start { width: 50px; padding-left: 11px; }
.app { width: 62px; height: 40px; display: flex; align-items: center; justify-content: center; }
.app svg { width: 34px; height: 34px; }
.win { width: 59px; margin: 0 1.500px; border: 1px solid #8da3cf; background: #5270ab; height: 38px; }
.active { background: linear-gradient(#6d83b8, #90a1ca); border-color: #e6ebf5; }
.tray { width: 90px; height: 24px; margin-right: 16px; }
.lang { font-size: 12px; margin-right: 19px; }
.clock { width: 60px; margin-right: 18px; display: flex; flex-direction: column; align-items: center; line-height: 17px; font-size: 12px; }
</style>
